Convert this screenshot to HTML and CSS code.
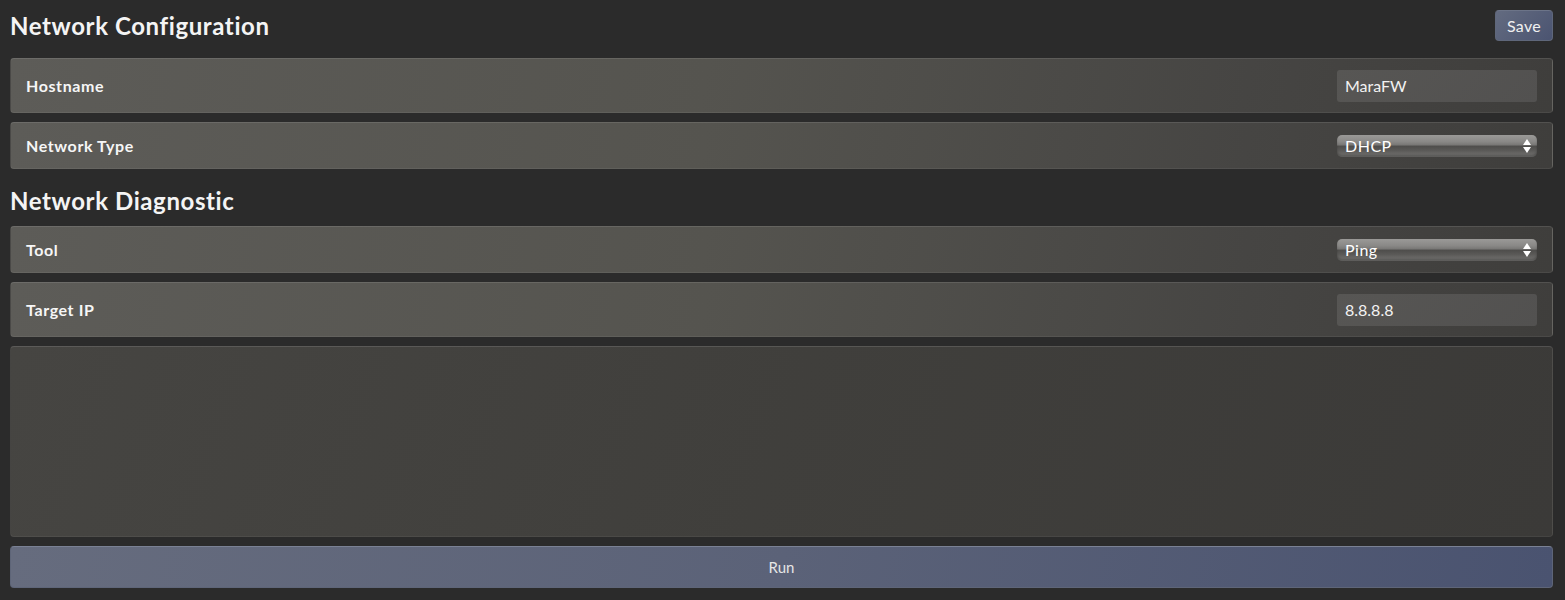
FILE: index.html
```html
<!DOCTYPE html>
<html>
<head>
<meta charset="utf-8">
<link rel="stylesheet" href="styles.css">
</head>
<body>
<div class="page">
  <div class="header">
    <h2 class="title">Network Configuration</h2>
    <button class="save-btn">Save</button>
  </div>
  <div class="row row-input">
    <span class="label">Hostname</span>
    <input class="field" type="text" value="MaraFW">
  </div>
  <div class="row row-select">
    <span class="label">Network Type</span>
    <span class="select-wrap">
      <select class="select"><option>DHCP</option><option>Static</option></select>
    </span>
  </div>
  <h2 class="title section-title">Network Diagnostic</h2>
  <div class="row row-select">
    <span class="label">Tool</span>
    <span class="select-wrap">
      <select class="select"><option>Ping</option><option>Traceroute</option></select>
    </span>
  </div>
  <div class="row row-input">
    <span class="label">Target IP</span>
    <input class="field" type="text" value="8.8.8.8">
  </div>
  <textarea class="output" readonly></textarea>
  <button class="run-btn">Run</button>
</div>
</body>
</html>
```

FILE: styles.css
```css
html, body {
  margin: 0;
  padding: 0;
  background: #2b2b2b;
}

.page {
  padding: 10px 12px 10px 10px;
  font-family: "Lato", "Open Sans", sans-serif;
  color: #f2f2f2;
  display: flex;
  flex-direction: column;
}

.header {
  display: flex;
  justify-content: space-between;
  align-items: center;
  height: 31px;
  margin-bottom: 17px;
}

.title {
  margin: 0;
  font-size: 24px;
  font-weight: 700;
  line-height: 26px;
  color: #f4f4f4;
  letter-spacing: 0.6px;
}

.section-title {
  margin: 10px 0 12px 0;
}

.save-btn {
  height: 31px;
  width: 58px;
  padding: 0;
  border: 1px solid #5f677a;
  border-top-color: #6c7488;
  border-radius: 4px;
  background: linear-gradient(135deg, #636b80 0%, #4b5471 100%);
  color: #f0f0f0;
  font-family: "Lato", "Open Sans", sans-serif;
  font-size: 16px;
  font-weight: 400;
  letter-spacing: 0.3px;
}

.row {
  display: flex;
  justify-content: space-between;
  align-items: center;
  padding: 0 15px;
  border: 1px solid rgba(255, 255, 255, 0.06);
  border-top-color: rgba(255, 255, 255, 0.10);
  border-radius: 4px;
  background: linear-gradient(100deg, #5d5c58 0%, #55544f 45%, #464543 80%, #3f3e3c 100%);
  margin-bottom: 9px;
}

.row-input {
  height: 53px;
}

.row-select {
  height: 45px;
}

.label {
  font-size: 16px;
  font-weight: 700;
  color: #f6f6f6;
  letter-spacing: 0.6px;
}

.field {
  width: 200px;
  height: 32px;
  box-sizing: border-box;
  padding: 0 8px;
  border: none;
  border-radius: 3px;
  background: linear-gradient(135deg, #575654 0%, #525150 100%);
  color: #f2f2f2;
  font-family: "Lato", "Open Sans", sans-serif;
  font-size: 16px;
  outline: none;
}

.select-wrap {
  position: relative;
  display: block;
  width: 200px;
  height: 22px;
}

.select {
  -webkit-appearance: none;
  appearance: none;
  width: 200px;
  height: 22px;
  box-sizing: border-box;
  margin: 0;
  padding: 0 8px;
  border: none;
  border-radius: 5px;
  background: linear-gradient(to bottom, #9a9997 0%, #8a8987 30%, #777674 46%, #4e4d4b 50%, #5a5957 70%, #6e6d6b 90%, #7e7d7b 100%);
  box-shadow: inset 0 -2px 2px rgba(0, 0, 0, 0.25);
  color: #ffffff;
  font-family: "Lato", "Open Sans", sans-serif;
  font-size: 16px;
  line-height: 22px;
  letter-spacing: 0.5px;
  outline: none;
}

.select-wrap::before,
.select-wrap::after {
  content: "";
  position: absolute;
  right: 6px;
  width: 0;
  height: 0;
  border-left: 4px solid transparent;
  border-right: 4px solid transparent;
  pointer-events: none;
}

.select-wrap::before {
  top: 4px;
  border-bottom: 6px solid #ffffff;
}

.select-wrap::after {
  top: 12px;
  border-top: 6px solid #ffffff;
}

.output {
  display: block;
  height: 191px;
  box-sizing: border-box;
  margin: 0 0 9px 0;
  padding: 8px;
  border: 1px solid rgba(255, 255, 255, 0.05);
  border-top-color: rgba(255, 255, 255, 0.12);
  border-radius: 4px;
  background: linear-gradient(110deg, #464542 0%, #403f3c 50%, #3b3a38 100%);
  resize: none;
  color: #eee;
  outline: none;
}

.run-btn {
  height: 42px;
  border: 1px solid #5e6578;
  border-top-color: #7a8194;
  border-radius: 4px;
  background: linear-gradient(100deg, #666c7e 0%, #5b6278 50%, #4a5370 100%);
  color: #e6e6e6;
  font-family: "Lato", "Open Sans", sans-serif;
  font-size: 15px;
}
```
